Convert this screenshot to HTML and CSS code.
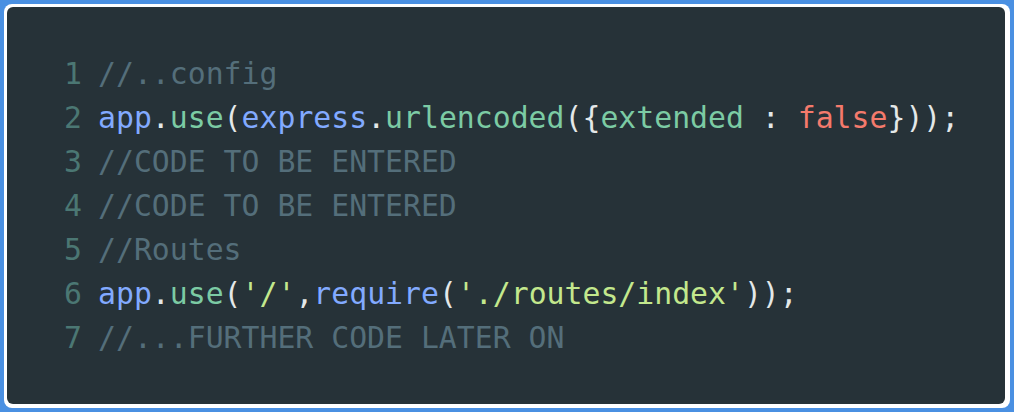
FILE: index.html
```html
<!DOCTYPE html>
<html>
<head>
<meta charset="utf-8">
<link rel="stylesheet" href="styles.css">
</head>
<body>
<div class="frame">
  <div class="code">
    <div class="line"><span class="ln">1</span><span class="src"><span class="cm">//..config</span></span></div>
    <div class="line"><span class="ln">2</span><span class="src"><span class="id">app</span><span class="p">.</span><span class="fn">use</span><span class="p">(</span><span class="id">express</span><span class="p">.</span><span class="fn">urlencoded</span><span class="p">({</span><span class="fn">extended</span><span class="p"> : </span><span class="kw">false</span><span class="p">}));</span></span></div>
    <div class="line"><span class="ln">3</span><span class="src"><span class="cm">//CODE TO BE ENTERED</span></span></div>
    <div class="line"><span class="ln">4</span><span class="src"><span class="cm">//CODE TO BE ENTERED</span></span></div>
    <div class="line"><span class="ln">5</span><span class="src"><span class="cm">//Routes</span></span></div>
    <div class="line"><span class="ln">6</span><span class="src"><span class="id">app</span><span class="p">.</span><span class="fn">use</span><span class="p">(</span><span class="str">'/'</span><span class="p">,</span><span class="id">require</span><span class="p">(</span><span class="str">'./routes/index'</span><span class="p">));</span></span></div>
    <div class="line"><span class="ln">7</span><span class="src"><span class="cm">//...FURTHER CODE LATER ON</span></span></div>
  </div>
</div>
</body>
</html>
```
FILE: styles.css
```css
html, body {
  margin: 0;
  padding: 0;
}
body {
  background: #4a90e2;
  padding: 4px;
  width: 1006px;
  height: 404px;
}
.frame {
  background: #ffffff;
  border-radius: 8px;
  padding: 3px 5px 4px 3px;
  height: 397px;
}
.code {
  background: #263238;
  border-radius: 6px;
  height: 397px;
  box-sizing: border-box;
  padding: 45px 0 0 57px;
  font-family: "DejaVu Sans Mono", monospace;
  font-size: 29.8px;
  line-height: 44px;
  color: #e4e8e8;
}
.line {
  display: flex;
  white-space: pre;
}
.ln {
  width: 18px;
  margin-right: 16px;
  color: #4b7773;
  text-align: right;
}
.cm { color: #546e7a; }
.id { color: #82aaff; }
.fn { color: #7ccba4; }
.p { color: #e4e8e8; }
.kw { color: #f47a6c; }
.str { color: #c3e88d; }
```
